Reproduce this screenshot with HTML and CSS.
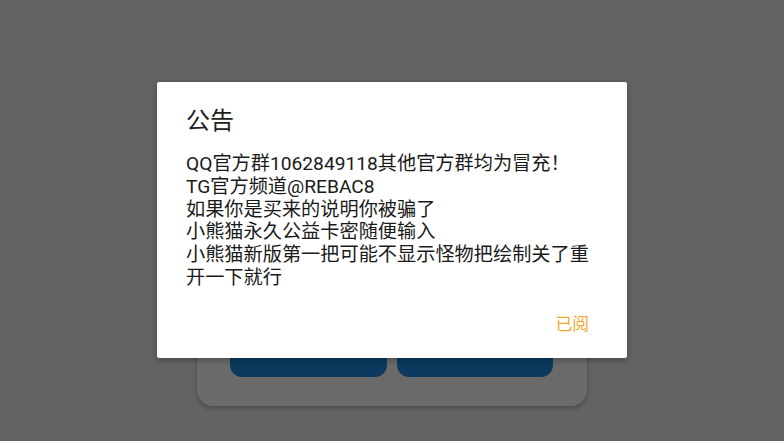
FILE: index.html
```html
<!DOCTYPE html>
<html lang="zh-CN">
<head>
<meta charset="utf-8">
<title>公告</title>
<link rel="stylesheet" href="styles.css">
</head>
<body>
<div class="screen">
  <div class="card">
    <div class="card-actions">
      <div class="card-btn"></div>
      <div class="card-btn"></div>
    </div>
  </div>
</div>
<div class="overlay">
  <div class="dialog">
    <div class="dialog-title">公告</div>
    <div class="dialog-message">QQ官方群1062849118其他官方群均为冒充！<br>TG官方频道@REBAC8<br>如果你是买来的说明你被骗了<br>小熊猫永久公益卡密随便输入<br>小熊猫新版第一把可能不显示怪物把绘制关了重开一下就行</div>
    <div class="dialog-actions">
      <span class="dialog-btn">已阅</span>
    </div>
  </div>
</div>
</body>
</html>
```

FILE: styles.css
```css
html, body {
  margin: 0;
  padding: 0;
}
body {
  width: 784px;
  height: 441px;
  background: #636363;
  overflow: hidden;
  position: relative;
  font-family: Roboto, "Noto Sans CJK SC", sans-serif;
}
.screen {
  height: 441px;
  display: flex;
  justify-content: center;
  align-items: flex-end;
  padding-bottom: 35px;
  box-sizing: border-box;
}
.card {
  width: 390px;
  height: 260px;
  background: #6a6a6a;
  border-radius: 16px;
  box-shadow: 0 2px 5px rgba(0,0,0,0.25);
  display: flex;
  flex-direction: column;
  justify-content: flex-end;
  padding: 0 34px 29px 33px;
  box-sizing: border-box;
}
.card-actions {
  display: flex;
  gap: 10px;
}
.card-btn {
  flex: 1;
  height: 48px;
  background: #0c3a5e;
  border-radius: 12px;
}
.overlay {
  position: absolute;
  inset: 0;
  display: flex;
  justify-content: center;
  align-items: center;
}
.dialog {
  width: 470px;
  height: 276px;
  background: #ffffff;
  border-radius: 2px;
  box-shadow: 0 2px 6px rgba(0,0,0,0.3);
  box-sizing: border-box;
  padding: 25px 0 0 0;
  display: flex;
  flex-direction: column;
  margin-top: -1px;
}
.dialog-title {
  font-size: 24px;
  line-height: 28px;
  color: #212121;
  padding: 0 29px;
}
.dialog-message {
  margin-top: 18px;
  font-size: 19.2px;
  line-height: 22.8px;
  color: #1a1a1a;
  padding: 0 29px;
}
.dialog-actions {
  display: flex;
  justify-content: flex-end;
  padding: 0 38px 0 0;
  margin-top: 22px;
}
.dialog-btn {
  font-size: 16.8px;
  line-height: 24px;
  color: #f2a82a;
}
```
